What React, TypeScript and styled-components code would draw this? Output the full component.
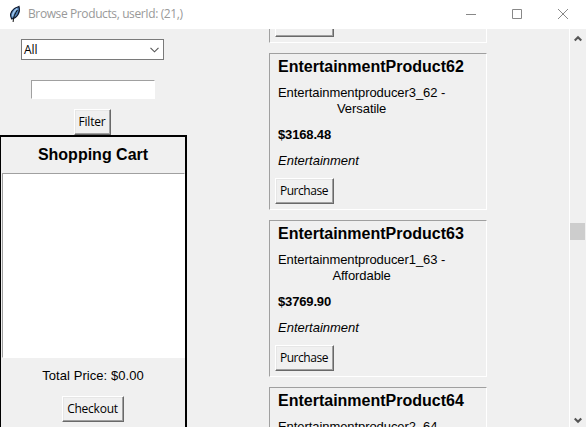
import React from "react";
import styled, { createGlobalStyle } from "styled-components";

const GlobalStyle = createGlobalStyle`
  * { box-sizing: border-box; }
  body { margin: 0; overflow: hidden; background: #f0f0f0; }
`;

const Window = styled.div`
  width: 586px;
  height: 427px;
  display: flex;
  flex-direction: column;
  overflow: hidden;
  background: #f0f0f0;
  color: #000;
  font: 13px/16px "Liberation Sans", Arial, sans-serif;
`;

const TitleBar = styled.header`
  flex: none;
  height: 29px;
  display: flex;
  align-items: center;
  padding: 0 17px 2px 8px;
  background: #fff;
`;

const Title = styled.span`
  flex: 1;
  margin-left: 6px;
  font: 12px/16px "Open Sans", "Noto Sans", sans-serif;
  letter-spacing: -0.39px;
  color: #999;
  white-space: nowrap;
`;

const WindowControls = styled.div`
  display: flex;
  gap: 34px;
`;

const Body = styled.main`
  flex: 1;
  min-height: 0;
  display: flex;
`;

const Sidebar = styled.aside`
  width: 187px;
  flex: none;
  display: flex;
  flex-direction: column;
  align-items: center;
  padding-top: 10px;
`;

const Combo = styled.div`
  width: 143px;
  height: 21px;
  flex: none;
  margin-right: 2px;
  display: flex;
  align-items: center;
  justify-content: space-between;
  padding: 1px 4px 0 2px;
  border: 1px solid #7a7a7a;
  background: #fff;
  font: 12px/18px "Open Sans", "Noto Sans", sans-serif;
`;

const Entry = styled.div`
  width: 124px;
  height: 19px;
  flex: none;
  margin: 20px 1px 10px 0;
  border: 1px solid;
  border-color: #a0a0a0 #fff #fff #a0a0a0;
  background: #fff;
`;

const Button = styled.button<{ $width: number; $spacing: number }>`
  flex: none;
  display: block;
  width: ${(p) => p.$width}px;
  height: 26px;
  padding: 0 1px 1px 0;
  border: 1px solid;
  border-color: #fff #696969 #696969 #fff;
  box-shadow: inset -1px -1px #a0a0a0, inset 1px 1px #e6e6e6;
  background: #f0f0f0;
  color: #000;
  font: 12px/16px "Open Sans", "Noto Sans", sans-serif;
  letter-spacing: ${(p) => p.$spacing}px;
  white-space: nowrap;
`;

const FilterRow = styled.div`
  flex: none;
  padding-right: 2px;
`;

const Cart = styled.section`
  width: 188px;
  height: 310px;
  flex: none;
  margin-left: -1px;
  display: flex;
  flex-direction: column;
  align-items: center;
  border: 2px solid #000;
`;

const CartTitle = styled.h2`
  margin: 9px 0 9px;
  font-size: 16px;
  line-height: 18px;
`;

const CartList = styled.div`
  width: 183px;
  height: 185px;
  flex: none;
  margin-left: 1px;
  border: 1px solid;
  border-color: #a0a0a0 #fff #fff #a0a0a0;
  background: #fff;
`;

const Total = styled.div`
  margin: 10px 0 12px;
  letter-spacing: 0.06px;
`;

const Viewport = styled.div`
  flex: 1;
  overflow: hidden;
`;

const ProductList = styled.div`
  display: flex;
  flex-direction: column;
  gap: 10px;
  padding-left: 82px;
`;

const Card = styled.article`
  width: 218px;
  height: 157px;
  flex: none;
  display: flex;
  flex-direction: column;
  align-items: flex-start;
  padding: 4px 8px 0;
  border: 1px solid;
  border-color: #a0a0a0 #fff #fff #a0a0a0;
`;

const CardTail = styled(Card)`
  height: 14px;
  justify-content: flex-end;
  padding: 0 5px 5px;
  border-top: 0;
`;

const ButtonEdge = styled.div`
  width: 59px;
  height: 8px;
  border: 1px solid;
  border-width: 0 1px 1px;
  border-color: #fff #696969 #696969 #fff;
  box-shadow: inset -1px -1px #a0a0a0;
`;

const Name = styled.h3`
  margin: 0 0 9px;
  font-size: 16px;
  line-height: 18px;
`;

const Description = styled.p`
  margin: 0 0 10px;
  letter-spacing: -0.07px;
  text-align: center;
  white-space: pre-line;
`;

const Price = styled.strong`
  margin-bottom: 10px;
  letter-spacing: -0.15px;
`;

const Category = styled.em`
  margin-bottom: 9px;
`;

const Action = styled.div`
  margin-left: -3px;
`;

const ScrollBar = styled.div`
  width: 17px;
  flex: none;
  display: flex;
  flex-direction: column;
  align-items: center;
  padding: 6px 1px 3px 0;
  border-left: 1px solid #fff;
  background: #f0f0f0;
`;

const Thumb = styled.div`
  width: 15px;
  height: 17px;
  margin: 181px 0 auto;
  background: #cdcdcd;
`;

const Feather = () => (
  <svg width="14" height="18" viewBox="0 0 14 18">
    <path d="M3.6 14C1.8 10.4 3 6.4 6 3.9 8 2.2 9.8 2.3 11 1.4c.8 2.6.5 5.6-.9 8C8.7 11.800 6.400 13.500 3.600 14Z" fill="#4f7fb5" stroke="#10192d" strokeWidth="1.1" />
    <path d="M9.300 3.600C6.500 5.600 4.700 8.500 4.500 11.500" fill="none" stroke="#a0c6ec" strokeWidth="1.600" />
    <path d="M9.400 5C7.300 8.300 5.200 11.800 5.100 17" fill="none" stroke="#111" strokeWidth="1" />
  </svg>
);

const Arrow = ({ up = false }: { up?: boolean }) => (
  <svg width="8" height="7" viewBox="0 0 8 7">
    <path d={up ? "M.7 5.500 4 2.200l3.300 3.300" : "M.7 1.500 4 4.800l3.300-3.300"} fill="none" stroke="#555" strokeWidth="2.200" />
  </svg>
);

type Product = {
  id: number;
  producer: number;
  quality?: string;
  price?: string;
  category?: string;
};

const products: Product[] = [
  { id: 62, producer: 3, quality: "Versatile", price: "$3168.48", category: "Entertainment" },
  { id: 63, producer: 1, quality: "Affordable", price: "$3769.90", category: "Entertainment" },
  { id: 64, producer: 2 },
];

export default function App() {
  return (
    <Window>
      <GlobalStyle />
      <TitleBar>
        <Feather />
        <Title>Browse Products, userId: (21,)</Title>
        <WindowControls>
          <svg width="12" height="12" viewBox="0 0 12 12">
            <path d="M1 6.5h10" stroke="#888" />
          </svg>
          <svg width="12" height="12" viewBox="0 0 12 12">
            <path d="M1.5 1.5h9v9h-9z" fill="none" stroke="#888" />
          </svg>
          <svg width="12" height="12" viewBox="0 0 12 12">
            <path d="m1 1 10 10M11 1 1 11" stroke="#888" />
          </svg>
        </WindowControls>
      </TitleBar>
      <Body>
        <Sidebar>
          <Combo>
            All
            <svg width="9" height="6" viewBox="0 0 9 6">
              <path d="m.5.8 4 4 4-4" fill="none" stroke="#555" strokeWidth="1.1" />
            </svg>
          </Combo>
          <Entry />
          <FilterRow>
            <Button $width={37} $spacing={-0.2}>Filter</Button>
          </FilterRow>
          <Cart>
            <CartTitle>Shopping Cart</CartTitle>
            <CartList />
            <Total>Total Price: $0.00</Total>
            <Button $width={62} $spacing={-0.25}>Checkout</Button>
          </Cart>
        </Sidebar>
        <Viewport>
          <ProductList>
            <CardTail>
              <ButtonEdge />
            </CardTail>
            {products.map((p) => (
              <Card key={p.id}>
                <Name>EntertainmentProduct{p.id}</Name>
                <Description>
                  {`Entertainmentproducer${p.producer}_${p.id} -\n${p.quality ?? ""}`}
                </Description>
                {p.price && <Price>{p.price}</Price>}
                {p.category && <Category>{p.category}</Category>}
                {p.price && (
                  <Action>
                    <Button $width={59} $spacing={-0.45}>Purchase</Button>
                  </Action>
                )}
              </Card>
            ))}
          </ProductList>
        </Viewport>
        <ScrollBar>
          <Arrow up />
          <Thumb />
          <Arrow />
        </ScrollBar>
      </Body>
    </Window>
  );
}
